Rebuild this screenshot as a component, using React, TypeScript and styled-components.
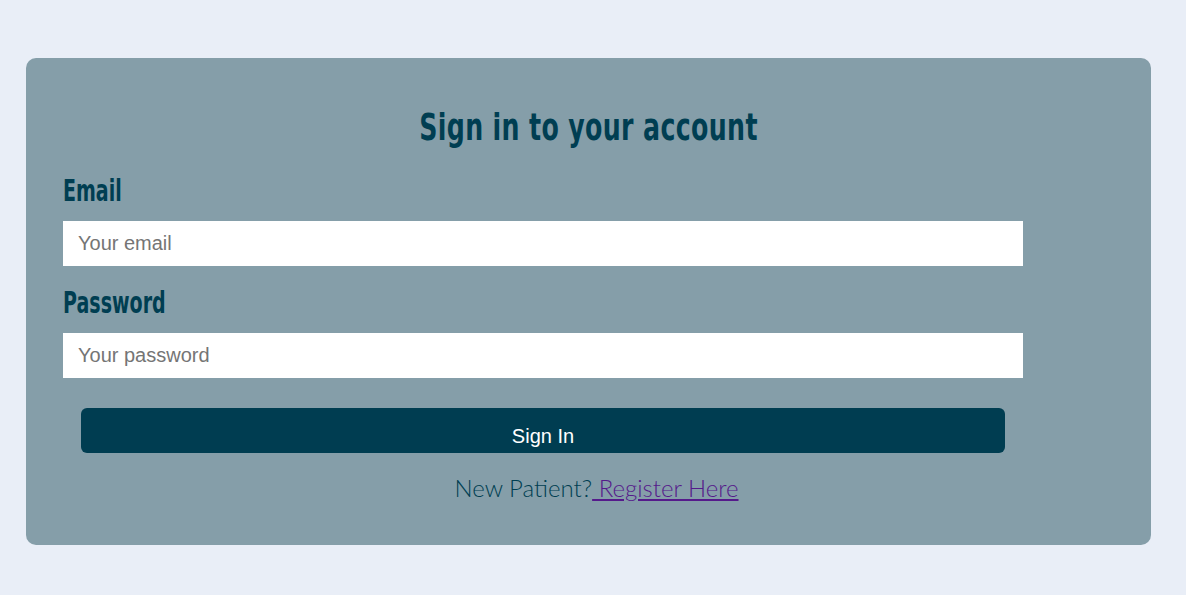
import styled, { createGlobalStyle } from "styled-components";

const GlobalStyle = createGlobalStyle`
  body {
    margin: 0;
    background-color: #e9eef7;
    font-family: "Liberation Sans", Arial, sans-serif;
  }
`;

const Page = styled.main`
  box-sizing: border-box;
  width: 100%;
  min-height: 595px;
  padding: 58px 35px 50px 26px;
`;

const Card = styled.section`
  box-sizing: border-box;
  width: 100%;
  height: 487px;
  padding: 40px 37px 0;
  background-color: #859ea9;
  border-radius: 10px;
`;

// condensed display face: no Oswald offline, so squeeze DejaVu Sans Bold
const Title = styled.h1`
  margin: 0 0 19px;
  text-align: center;
  font-family: "DejaVu Sans", sans-serif;
  font-size: 38px;
  font-weight: 700;
  line-height: 58px;
  letter-spacing: 0.5px;
  color: #003e52;
  transform: scaleX(0.665);
  transform-origin: center;
`;

const Form = styled.form`
  width: 960px;
  display: flex;
  flex-direction: column;
`;

const Label = styled.label`
  display: block;
  font-family: "DejaVu Sans", sans-serif;
  font-size: 30px;
  font-weight: 700;
  line-height: 32px;
  color: #003e52;
  margin-bottom: 14px;
  transform: scaleX(0.635);
  transform-origin: left;
`;

const Input = styled.input`
  box-sizing: border-box;
  width: 100%;
  height: 45px;
  padding: 0 15px;
  border: none;
  outline: none;
  background: #ffffff;
  font-family: "Liberation Sans", Arial, sans-serif;
  font-size: 20px;
  color: #333;
  margin-bottom: 21px;

  &::placeholder {
    color: #757575;
  }
`;

const Button = styled.button`
  box-sizing: border-box;
  height: 45px;
  margin: 9px 18px 0;
  padding-top: 13px;
  border: none;
  border-radius: 6px;
  background-color: #003d51;
  color: #ffffff;
  font-family: "Liberation Sans", Arial, sans-serif;
  font-size: 20px;
  cursor: pointer;
`;

const Footer = styled.p`
  margin: 19px 0 0;
  padding-left: 16px;
  text-align: center;
  font-family: Lato, "Liberation Sans", sans-serif;
  font-weight: 300;
  font-size: 24px;
  line-height: 32px;
  color: #003e52;

  a {
    color: #551a8b;
    text-decoration: underline;
  }
`;

export default function App() {
  return (
    <>
      <GlobalStyle />
      <Page>
        <Card>
          <Title>Sign in to your account</Title>
          <Form onSubmit={(e) => e.preventDefault()}>
            <Label htmlFor="email">Email</Label>
            <Input id="email" type="email" placeholder="Your email" />
            <Label htmlFor="password">Password</Label>
            <Input id="password" type="password" placeholder="Your password" />
            <Button type="submit">Sign In</Button>
          </Form>
          <Footer>
            New Patient?<a href="#register"> Register Here</a>
          </Footer>
        </Card>
      </Page>
    </>
  );
}
